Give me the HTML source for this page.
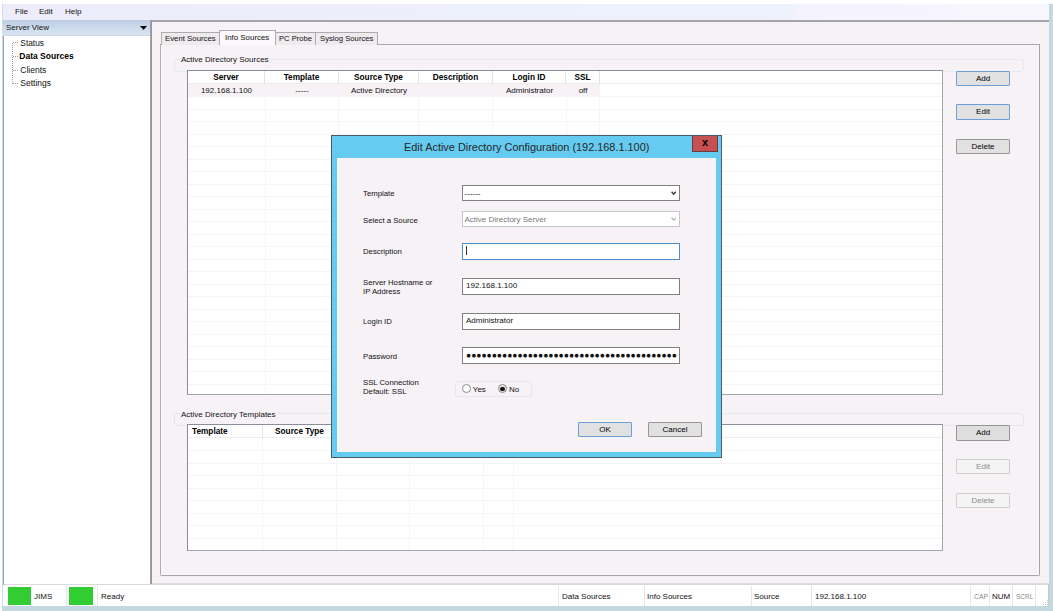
<!DOCTYPE html>
<html><head><meta charset="utf-8">
<style>
*{box-sizing:border-box;margin:0;padding:0}
html,body{width:1053px;height:611px;overflow:hidden;background:#fff}
body{position:relative;font-family:"Liberation Sans",sans-serif;font-size:8px;color:#111;line-height:1}
.a{position:absolute}
.t{position:absolute;white-space:nowrap;line-height:10px;height:10px}
.menubar{left:3px;top:4px;width:1046px;height:16px;background:linear-gradient(90deg,#ececfb 0,#eeeefc 442px,#ecf1fd 446px,#eef2fd 788px,#f5f3fd 796px,#f6f4fe 948px,#f8f6ff 956px,#f8f6ff 100%)}
.rstrip{left:1049px;top:4px;width:4px;height:607px;background:#c4d8df}
.bstrip{left:2px;top:606px;width:1051px;height:5px;background:#c4d8df}
.lstrip{left:2px;top:4px;width:1.3px;height:607px;background:#cbdde6}
.svhead{left:3px;top:20px;width:147px;height:16px;background:linear-gradient(180deg,#bccde4 0%,#cfdded 60%,#d8e5f2 100%)}
.tree{left:3px;top:36px;width:147px;height:548.6px;background:#fff;border-left:1px solid #9aa3ad;border-bottom:1.4px solid #a5a2a7}
.vsep{left:150px;top:20px;width:2px;height:563.6px;background:linear-gradient(90deg,#b5b2b7 0,#9a979c 40%,#9a979c 100%)}
.panel{left:152px;top:20px;width:897px;height:564px;background:#f6f2f6;border-top:2px solid #a7a4a9;border-bottom:1px solid #e0dde0}
.tab{position:absolute;border:1px solid #adaaaf;border-bottom:none;background:#eeeaee}
.tabsel{background:#fbf9fb;z-index:3}
.tabpage{left:160px;top:44px;width:880px;height:532px;border:1px solid #adaaaf;border-right-color:#a5a2a8;border-bottom-color:#a5a2a8;background:#f6f2f6;box-shadow:inset 1px 0 0 #fdfcfd,inset -1px -1px 0 #fbfafb;border-radius:0 0 2px 2px}
.gbox{position:absolute;border:1px solid #e4e9f0;border-radius:3px}
.glabel{position:absolute;background:#f6f2f6;padding:0 1px;line-height:10px;white-space:nowrap}
.list{position:absolute;background:#fff;border:1px solid #8a8e9b;border-right-color:#a3a5b0;border-bottom-color:#a3a5b0;overflow:hidden}
.rows{position:absolute;left:0;right:0;top:0;bottom:0}
.hcell{position:absolute;top:0;height:12.6px;font-size:8.25px;font-weight:bold;text-align:center;line-height:13.6px;border-right:1px solid #e3e3e3;border-bottom:1px solid #ececec;white-space:nowrap;color:#000}
.cline{position:absolute;top:12px;bottom:0;width:1px;background:#f6f4f6}
.cell{position:absolute;text-align:center;line-height:13.6px;height:13px;white-space:nowrap}
.btn{position:absolute;width:54px;height:15.6px;background:#e1e1e1;border:1px solid #969696;border-radius:1px;text-align:center;line-height:14px;color:#000}
.btn.f{border-color:#6aa0d8}
.btn.d{background:#f5f4f5;border-color:#cfcfcf;color:#8c8c8c}
.dlg{left:331px;top:135px;width:391px;height:323px;background:#66cbf0;border:1px solid #4c5b66;z-index:10}
.dbody{left:5px;top:22px;width:379px;height:294px;background:#f6f2f6}
.inp{position:absolute;left:125px;width:218px;background:#fff;border:1px solid #808080;line-height:13px;padding-left:3px;white-space:nowrap;overflow:hidden}
.status{left:4px;top:584px;width:1045px;height:22px;background:#fff;border-top:1px solid #dddadd;border-right:1px solid #c8c8c8}
.ssep{position:absolute;top:1px;width:1px;height:20px;background:#e6e6e6}
</style></head><body>
<div class="a menubar"></div>
<div class="t" style="left:15px;top:7px">File</div>
<div class="t" style="left:39px;top:7px">Edit</div>
<div class="t" style="left:65px;top:7px">Help</div>
<div class="a rstrip"></div>
<div class="a lstrip"></div>
<div class="a svhead"></div><div class="a" style="left:4px;top:35px;width:146px;height:1px;background:#d3d6de"></div>
<div class="t" style="left:6px;top:23px">Server View</div>
<svg class="a" style="left:140px;top:26px" width="7" height="4"><path d="M0 0H7L3.5 4Z" fill="#000"/></svg>
<div class="a tree"></div>
<svg class="a" style="left:11px;top:38px" width="10" height="50"><path d="M1.5 4.5V45.5M1.5 4.5H8M1.5 18.5H8M1.5 32H8M1.5 45.5H8" stroke="#9c9c9c" stroke-width="1" stroke-dasharray="1 1" fill="none" shape-rendering="crispEdges"/></svg>
<div class="t" style="left:20.3px;top:38.3px;font-size:8.4px">Status</div>
<div class="t" style="left:19.3px;top:50.7px;font-size:8.5px;font-weight:bold;color:#000">Data Sources</div>
<div class="t" style="left:20.3px;top:64.7px;font-size:8.5px">Clients</div>
<div class="t" style="left:20.3px;top:78px;font-size:8.5px">Settings</div>
<div class="a vsep"></div>
<div class="a panel"></div>
<div class="a tabpage"></div>
<div class="tab" style="left:161px;top:31.5px;width:59px;height:13.5px"></div>
<div class="tab" style="left:275px;top:31.5px;width:41px;height:13.5px"></div>
<div class="tab" style="left:315px;top:31.5px;width:63px;height:13.5px"></div>
<div class="tab tabsel" style="left:219px;top:30px;width:57px;height:15px"></div>
<div class="t" style="left:165px;top:34px;z-index:4;font-size:7.8px">Event Sources</div>
<div class="t" style="left:225px;top:32.6px;z-index:4;font-size:7.9px">Info Sources</div>
<div class="t" style="left:279px;top:34px;z-index:4;font-size:7.6px">PC Probe</div>
<div class="t" style="left:320px;top:34px;z-index:4;font-size:7.7px">Syslog Sources</div>

<!-- group 1 -->
<div class="gbox" style="left:174px;top:59px;width:850px;height:13px"></div>
<div class="glabel" style="left:180px;top:55.4px">Active Directory Sources</div>
<div class="list" style="left:187px;top:70px;width:756px;height:325px">
  <div class="rows" style="background:repeating-linear-gradient(180deg,transparent 0,transparent 11.48px,#f6f3f6 11.48px,#f6f3f6 12.48px);top:13.9px"></div>
  <div class="a" style="left:0;top:12.6px;width:411.5px;height:12.9px;background:#f6f2f6"></div>
  <div class="cline" style="left:76.6px"></div><div class="cline" style="left:150.4px"></div><div class="cline" style="left:230.3px"></div><div class="cline" style="left:304.2px"></div><div class="cline" style="left:377.5px"></div><div class="cline" style="left:411px"></div>
  <div class="hcell" style="left:0;width:77px">Server</div>
  <div class="hcell" style="left:77px;width:74px">Template</div>
  <div class="hcell" style="left:151px;width:80px">Source Type</div>
  <div class="hcell" style="left:231px;width:74px">Description</div>
  <div class="hcell" style="left:305px;width:73px">Login ID</div>
  <div class="hcell" style="left:378px;width:34px">SSL</div>
  <div class="hcell" style="left:412px;width:343px;border-right:none"></div>
  <div class="cell" style="left:0;top:13px;width:77px">192.168.1.100</div>
  <div class="cell" style="left:77px;top:13px;width:74px">-----</div>
  <div class="cell" style="left:151px;top:13px;width:80px">Active Directory</div>
  <div class="cell" style="left:305px;top:13px;width:73px">Administrator</div>
  <div class="cell" style="left:378px;top:13px;width:34px">off</div>
</div>
<div class="btn f" style="left:956px;top:70.8px">Add</div>
<div class="btn f" style="left:956px;top:104.4px">Edit</div>
<div class="btn" style="left:956px;top:138.6px">Delete</div>

<!-- group 2 -->
<div class="gbox" style="left:174px;top:413px;width:850px;height:13px"></div>
<div class="glabel" style="left:180px;top:409.8px">Active Directory Templates</div>
<div class="list" style="left:187px;top:424px;width:756px;height:127px">
  <div class="rows" style="background:repeating-linear-gradient(180deg,transparent 0,transparent 11.5px,#f6f3f6 11.5px,#f6f3f6 12.5px);top:13.5px"></div>
  <div class="cline" style="left:74px"></div><div class="cline" style="left:148px"></div><div class="cline" style="left:221px"></div><div class="cline" style="left:295px"></div><div class="cline" style="left:325px"></div>
  <div class="hcell" style="left:0;width:75px;text-align:left;padding-left:4px">Template</div>
  <div class="hcell" style="left:75px;width:74px">Source Type</div>
  <div class="hcell" style="left:149px;width:73px"></div>
  <div class="hcell" style="left:222px;width:74px"></div>
  <div class="hcell" style="left:296px;width:30px"></div>
  <div class="hcell" style="left:326px;width:429px;border-right:none"></div>
</div>
<div class="btn" style="left:956px;top:425.3px;background:#dedede">Add</div>
<div class="btn d" style="left:956px;top:458.7px">Edit</div>
<div class="btn d" style="left:956px;top:492.6px">Delete</div>

<!-- dialog -->
<div class="a dlg">
  <div class="t" style="left:72px;top:4.1px;font-size:11.6px;line-height:14px;height:14px;color:#262626;transform:scaleX(.94);transform-origin:0 0">Edit Active Directory Configuration (192.168.1.100)</div>
  <div class="a" style="left:360.4px;top:0;width:25.4px;height:16px;background:#c75050;border:1px solid #6b3b3f;border-top:none;text-align:center;font-weight:bold;font-size:11px;line-height:12px;color:#000">x</div>
  <div class="a dbody">
    <div class="t" style="left:26px;top:31.2px;font-size:7.75px">Template</div>
    <div class="inp" style="top:27px;height:16px;padding-left:1.5px;line-height:15.4px">------</div>
    <svg class="a" style="left:333.8px;top:33.2px" width="5.4" height="4.4"><path d="M0.6 0.7L2.7 3.2L4.8 0.7" stroke="#3c3c3c" stroke-width="1.5" fill="none"/></svg>
    <div class="t" style="left:26px;top:58.2px;font-size:7.75px">Select a Source</div>
    <div class="inp" style="top:53px;height:16px;border-color:#c3c7cc;color:#787878;padding-left:1.5px;line-height:15.8px">Active Directory Server</div>
    <svg class="a" style="left:333.8px;top:59.4px" width="5.4" height="4.4"><path d="M0.6 0.7L2.7 3.2L4.8 0.7" stroke="#b4b4b4" stroke-width="1.2" fill="none"/></svg>
    <div class="t" style="left:26px;top:89px;font-size:7.75px">Description</div>
    <div class="inp" style="top:85px;height:17px;border-color:#4f8dc6"></div>
    <div class="a" style="left:129px;top:88px;width:1px;height:9px;background:#333"></div>
    <div class="t" style="left:26px;top:120px;font-size:7.75px;line-height:9.2px;height:20px;white-space:normal;width:90px">Server Hostname or<br>IP Address</div>
    <div class="inp" style="top:120px;height:17px">192.168.1.100</div>
    <div class="t" style="left:26px;top:159.2px;font-size:7.75px">Login ID</div>
    <div class="inp" style="top:154.6px;height:17.2px;line-height:13px">Administrator</div>
    <div class="t" style="left:26px;top:193.8px;font-size:7.75px">Password</div>
    <div class="inp" style="top:189px;height:17px;font-size:8.5px;letter-spacing:0.01px;line-height:14px">●●●●●●●●●●●●●●●●●●●●●●●●●●●●●●●●●●●●●●●●●</div>
    <div class="t" style="left:26px;top:219.8px;font-size:7.75px;line-height:9.2px;height:20px;white-space:normal;width:90px">SSL Connection<br>Default: SSL</div>
    <div class="gbox" style="left:118px;top:223px;width:77px;height:16px;border-color:#e3e8f0"></div>
    <div class="a" style="left:125px;top:226.4px;width:9px;height:9px;border:1px solid #8c8c8c;border-radius:50%;background:#fff"></div>
    <div class="t" style="left:135.8px;top:227.3px">Yes</div>
    <div class="a" style="left:161px;top:226.4px;width:9px;height:9px;border:1px solid #8c8c8c;border-radius:50%;background:#e4e4e4"></div>
    <div class="a" style="left:163.2px;top:228.6px;width:4.6px;height:4.6px;border-radius:50%;background:#111"></div>
    <div class="t" style="left:172px;top:227.3px">No</div>
    <div class="btn f" style="left:241px;top:263.7px">OK</div>
    <div class="btn" style="left:311px;top:263.7px">Cancel</div>
  </div>
</div>

<!-- status bar -->
<div class="a status">
  <div class="a" style="left:4px;top:2px;width:23px;height:18px;background:#32cd32"></div>
  <div class="t" style="left:30px;top:6.7px">JIMS</div>
  <div class="ssep" style="left:62px"></div>
  <div class="a" style="left:65px;top:2px;width:24px;height:18px;background:#32cd32"></div>
  <div class="ssep" style="left:93px"></div>
  <div class="t" style="left:97px;top:6.7px">Ready</div>
  <div class="ssep" style="left:554px"></div>
  <div class="t" style="left:558px;top:6.7px">Data Sources</div>
  <div class="ssep" style="left:640px"></div>
  <div class="t" style="left:643px;top:6.7px">Info Sources</div>
  <div class="ssep" style="left:747px"></div>
  <div class="t" style="left:750px;top:6.7px">Source</div>
  <div class="ssep" style="left:807px"></div>
  <div class="t" style="left:811px;top:6.7px">192.168.1.100</div>
  <div class="ssep" style="left:966px"></div>
  <div class="t" style="left:970px;top:6.7px;color:#8a8a8a;transform:scaleX(.85);transform-origin:0 0">CAP</div>
  <div class="ssep" style="left:985px"></div>
  <div class="t" style="left:988px;top:6.7px;color:#111">NUM</div>
  <div class="ssep" style="left:1008px"></div>
  <div class="t" style="left:1012px;top:6.7px;color:#8a8a8a;transform:scaleX(.81);transform-origin:0 0">SCRL</div>
  <div class="ssep" style="left:1031px"></div>
  <svg class="a" style="left:1038.5px;top:15px" width="6" height="6"><path d="M4 0h1v1h-1zM2 2h1v1h-1zM4 2h1v1h-1zM0 4h1v1h-1zM2 4h1v1h-1zM4 4h1v1h-1z" fill="#c4c4c4"/></svg>
</div>
<div class="a bstrip"></div>
</body></html>
